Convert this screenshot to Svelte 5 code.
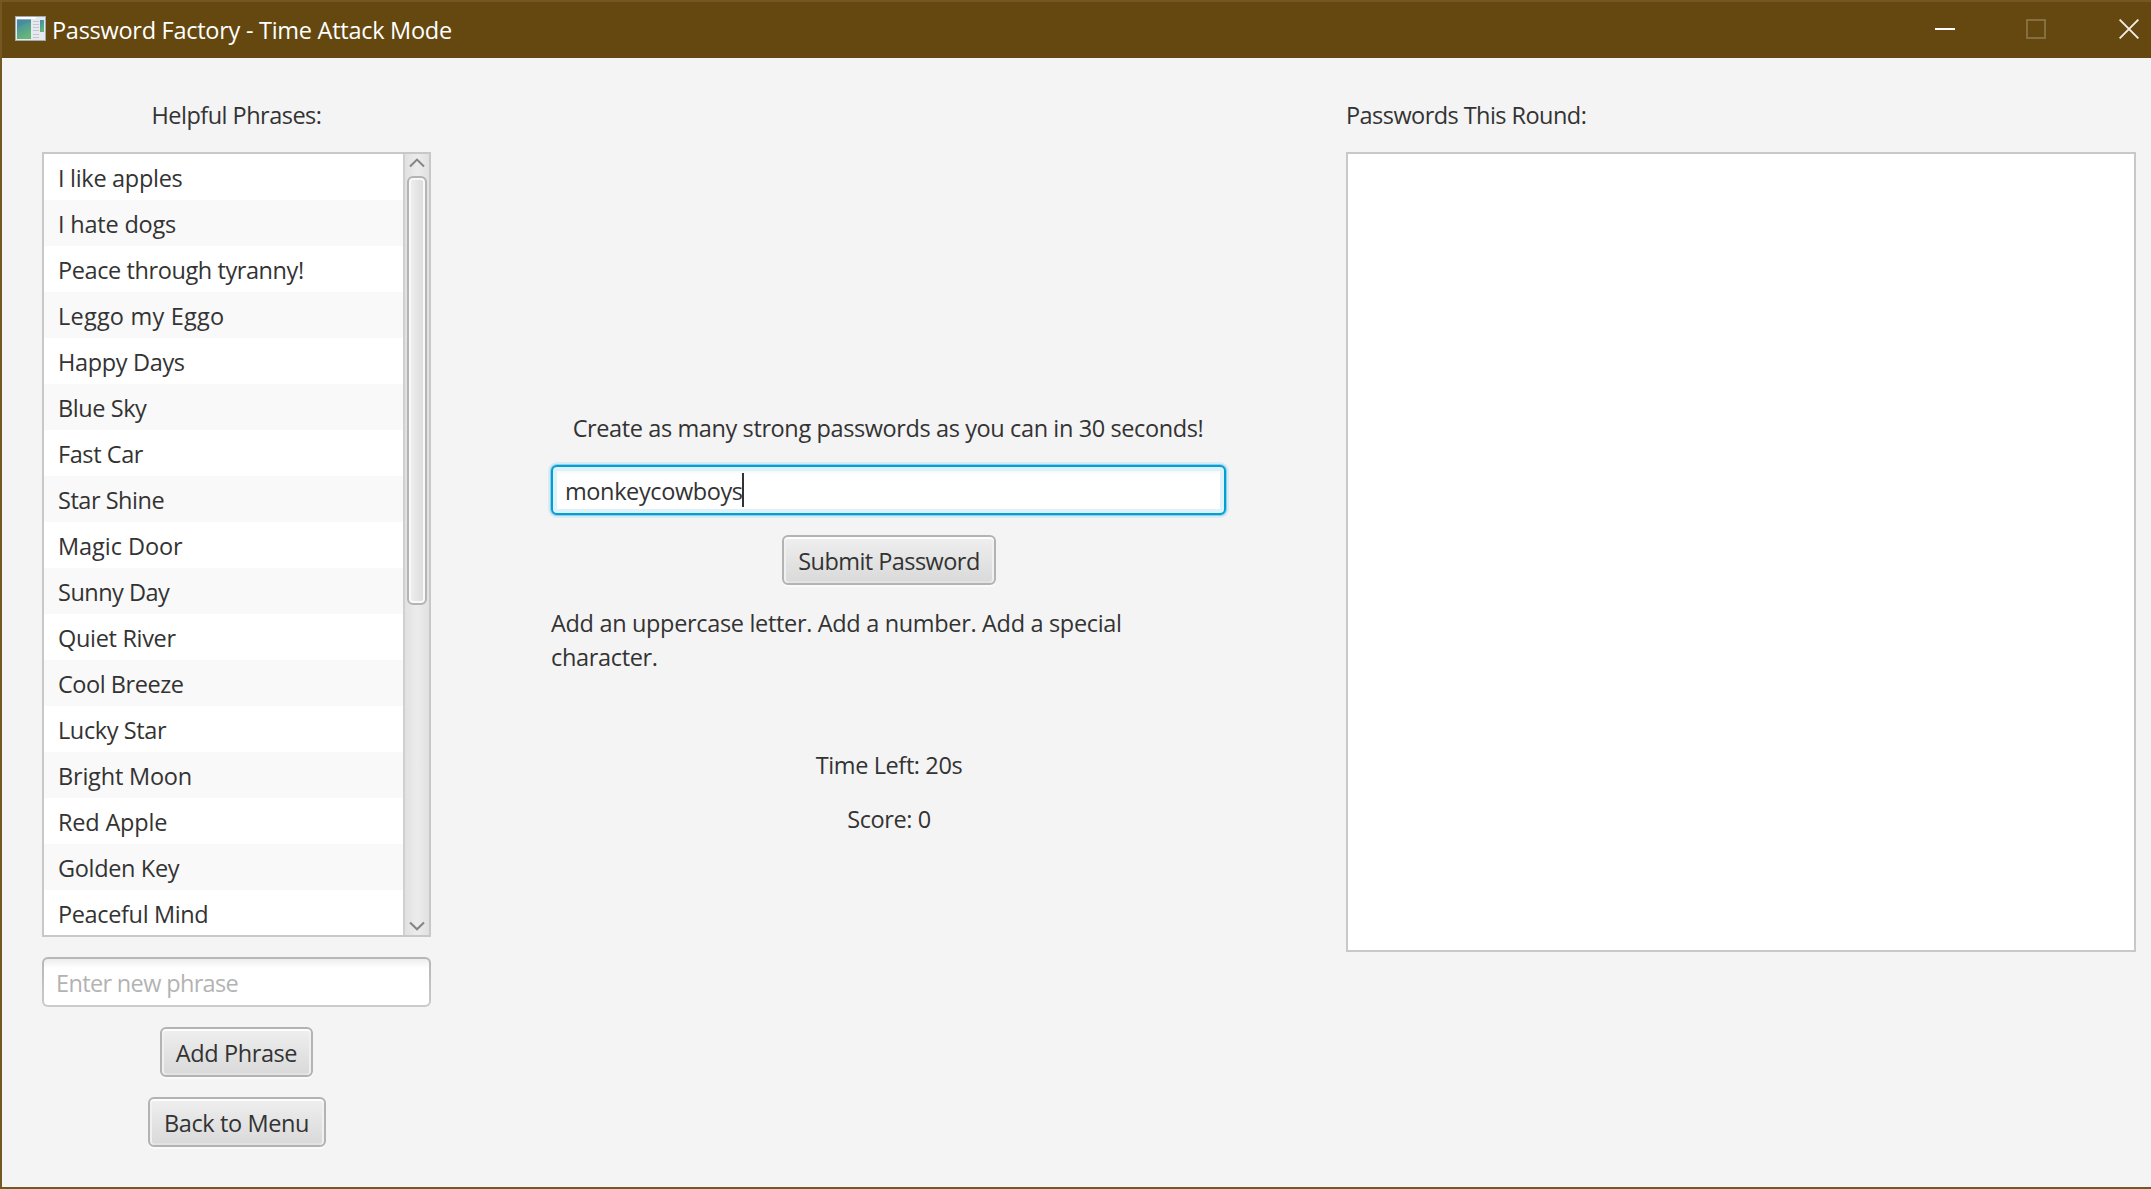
<script>
  // Each phrase carries its own tracking, in pixels.
  const phrases = [
    ['I like apples', -0.3], ['I hate dogs', -0.2], ['Peace through tyranny!', -0.41],
    ['Leggo my Eggo', 0.22], ['Happy Days', -0.34], ['Blue Sky', -0.42],
    ['Fast Car', -0.42], ['Star Shine', -0.47], ['Magic Door', -0.06],
    ['Sunny Day', -0.5], ['Quiet River', -0.32], ['Cool Breeze', -0.45],
    ['Lucky Star', -0.4], ['Bright Moon', -0.2], ['Red Apple', -0.2],
    ['Golden Key', -0.34], ['Peaceful Mind', -0.36],
  ];
  const timeLeft = 20;
  const score = 0;
  const password = 'monkeycowboys';
</script>

<div class="window">
  <header class="titlebar">
    <svg class="app-icon" width="31" height="26" viewBox="0 0 31 26">
      <defs>
        <linearGradient id="pane" x1="0" y1="0" x2="0.4" y2="1">
          <stop offset="0" stop-color="#4c88a8" />
          <stop offset="0.45" stop-color="#4f9c94" />
          <stop offset="1" stop-color="#68b578" />
        </linearGradient>
      </defs>
      <rect x="0" y="0" width="31" height="25" fill="#a3abb2" />
      <rect x="1" y="1" width="29" height="23" fill="#e6eaf0" />
      <rect x="1" y="1" width="20" height="2" fill="#fff" />
      <rect x="2" y="3.5" width="14" height="19.5" fill="url(#pane)" />
      <path d="M2 13Q7 7 16 6V3.5H2z" fill="#3f7fa4" opacity=".4" />
      <path d="M18 5.5h6M18 8.5h6M18 11.5h6M18 14.5h6M18 18.5h6M18 21.5h6" stroke="#c3c7cc" />
      <rect x="25" y="4" width="4" height="12" fill="url(#pane)" />
    </svg>
    <span class="title">Password Factory - Time Attack Mode</span>
    <div class="controls">
      <svg width="20" height="20" viewBox="0 0 20 20"><path d="M0 10h20" stroke="#fff" stroke-width="2" /></svg>
      <svg width="20" height="20" viewBox="0 0 20 20"><rect x="1" y="1" width="18" height="18" fill="none" stroke="#856e40" stroke-width="2" /></svg>
      <svg width="20" height="20" viewBox="0 0 20 20"><path d="M.6 .6l18.8 18.8M19.4 .6L.6 19.4" stroke="#f3efe8" stroke-width="1.9" /></svg>
    </div>
  </header>

  <main>
    <section class="left">
      <div class="label helpful">Helpful Phrases:</div>
      <div class="list">
        <ul>
          {#each phrases as [phrase, tracking]}
            <li style:letter-spacing="{tracking}px">{phrase}</li>
          {/each}
        </ul>
        <div class="scrollbar">
          <svg class="arrow" width="16" height="10" viewBox="0 0 16 10"><path d="M1 8.4L8 1.6l7 6.8" fill="none" stroke="#858585" stroke-width="2.1" /></svg>
          <div class="thumb"></div>
          <svg class="arrow down" width="16" height="10" viewBox="0 0 16 10"><path d="M1 1.4L8 8.2l7-6.8" fill="none" stroke="#858585" stroke-width="2.1" /></svg>
        </div>
      </div>
      <div class="field"><span class="prompt">Enter new phrase</span></div>
      <button class="add">Add Phrase</button>
      <button class="back">Back to Menu</button>
    </section>

    <section class="center">
      <div class="label create">Create as many strong passwords as you can in 30 seconds!</div>
      <div class="field focused"><span class="value">{password}</span><i class="caret"></i></div>
      <button class="submit">Submit Password</button>
      <p class="feedback">Add an uppercase letter. Add a number. Add a special character.</p>
      <div class="label time">Time Left: {timeLeft}s</div>
      <div class="label score">Score: {score}</div>
    </section>

    <section class="right">
      <div class="label round">Passwords This Round:</div>
      <div class="results"></div>
    </section>
  </main>
</div>

<style>
  :global(body) { margin: 0; overflow: hidden; }
  .window {
    box-sizing: border-box;
    width: 2151px;
    height: 1189px;
    border: 2px solid #745824;
    border-right: 0;
    background: #f4f4f4;
    color: #333;
    font-family: 'Open Sans', 'Noto Sans', sans-serif;
    font-size: 23.5px;
    letter-spacing: -0.39px;
    line-height: 34px;
    white-space: nowrap;
  }
  .titlebar {
    display: flex;
    align-items: center;
    height: 56px;
    box-sizing: border-box;
    padding: 0 12px 2px 13px;
    background: #65480f;
    color: #fff;
  }
  .app-icon { margin-right: 6px; flex: none; }
  .title { padding-top: 1px; letter-spacing: -0.27px; }
  .controls { display: flex; margin-left: auto; }
  .controls svg { margin-left: 71px; }
  .controls svg + svg + svg { margin-left: 73px; }
  main {
    display: flex;
    padding: 40px 0 0 40px;
    align-items: flex-start;
  }
  section { display: flex; flex: none; flex-direction: column; align-items: center; }
  .left { width: 389px; margin-right: 120px; }
  .center { width: 676px; margin-right: 119px; }
  .right { width: 790px; align-items: flex-start; }
  .label { height: 34px; }
  .helpful { letter-spacing: -0.52px; }
  .list {
    display: flex;
    width: 385px;
    height: 781px;
    margin-top: 20px;
    border: 2px solid #c8c8c8;
    background: #fff;
    overflow: hidden;
  }
  ul { flex: 1; margin: 0; padding: 0; list-style: none; }
  li { height: 46px; line-height: 48px; padding-left: 14px; box-sizing: border-box; }
  li:nth-child(even) { background: #f9f9f9; }
  .scrollbar {
    display: flex;
    flex-direction: column;
    align-items: center;
    width: 24px;
    border-left: 2px solid #d0d0d0;
    background: linear-gradient(90deg, #e1e1e1, #ececec 50%, #e1e1e1);
  }
  .arrow { margin: 4px 0 8px; flex: none; }
  .arrow.down { margin: auto 0 4px; }
  .thumb {
    box-sizing: border-box;
    width: 20px;
    height: 429px;
    border: 2px solid #b4b4b4;
    border-radius: 6px;
    background: linear-gradient(90deg, #f0f0f0, #dadada);
    box-shadow: inset 0 0 0 2px #f9f9f9;
  }
  .field {
    display: flex;
    align-items: center;
    box-sizing: border-box;
    width: 389px;
    height: 50px;
    margin: 20px 0;
    padding: 2px 12px 0;
    border-radius: 6px;
    border: 2px solid transparent;
    background:
      linear-gradient(#ededed, #fff 9px) padding-box,
      linear-gradient(#b6b6b6, #cbcbcb) border-box;
  }
  .prompt { color: #b3b3b3; letter-spacing: -0.65px; }
  .focused {
    align-self: flex-start;
    width: 675px;
    border: 2px solid #039ed3;
    background: #fff;
    box-shadow: inset 0 0 0 4px #def2f9, inset 0 6px 3px #f5f8f9, 0 0 0 1px #8ccfe6, 0 0 0 3px #d9ecf3;
  }
  .caret { width: 2px; height: 34px; background: #333; margin: -3px 0 0 -1px; }
  button {
    box-sizing: border-box;
    height: 50px;
    padding: 2px 0 0;
    border: 2px solid #b3b3b3;
    border-radius: 6px;
    background: linear-gradient(#efefef, #d9d9d9);
    box-shadow: inset 0 2px #fdfdfd, inset 2px 0 #f0f0f0, inset -2px 0 #f0f0f0, inset 0 -2px #e2e2e2, 0 2px #fafafa;
    color: #333;
    font: inherit;
    letter-spacing: -0.4px;
  }
  .add { width: 153px; }
  .back { width: 178px; margin-top: 20px; }
  .submit { width: 214px; letter-spacing: -0.55px; }
  .create { margin-top: 313px; padding-right: 2px; }
  .feedback { width: 676px; height: 68px; margin: 21px 0 0; white-space: normal; box-sizing: border-box; padding-right: 40px; letter-spacing: -0.33px; }
  .time { margin-top: 74px; }
  .score { margin-top: 20px; }
  .round { letter-spacing: -0.55px; }
  .results { box-sizing: border-box; width: 790px; height: 800px; margin-top: 20px; border: 2px solid #c8c8c8; background: #fff; }
</style>
